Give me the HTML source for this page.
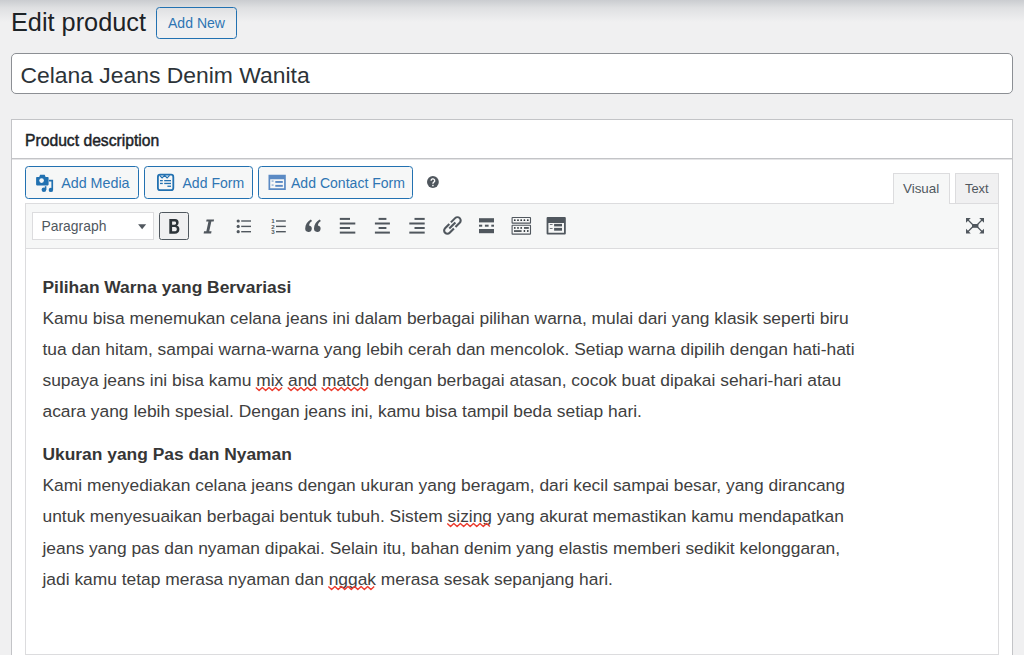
<!DOCTYPE html>
<html><head><meta charset="utf-8">
<style>
*{box-sizing:border-box;margin:0;padding:0}
html,body{width:1024px;height:655px;overflow:hidden}
body{position:relative;background:#f0f0f1 linear-gradient(to bottom,#caccd0 0px,#dfe0e2 8px,#f0f0f1 22px) no-repeat;background-size:100% 24px;font-family:"Liberation Sans",sans-serif;color:#1d2327}
.a{position:absolute;white-space:nowrap;line-height:1}
.bx{position:absolute}
.btn{position:absolute;border:1.2px solid #2271b1;border-radius:3.5px;background:#f6f7f7}
.bt{color:#2f75b3;font-size:14.05px}
.c{position:absolute;left:42.5px;font-size:17.4px;line-height:31.1px;color:#404040;white-space:nowrap}
.c b{color:#363636}
.sp{}
</style></head><body>
<div class="a" style="left:11px;top:10.2px;font-size:25.3px;color:#1d2327">Edit product</div>
<div class="btn" style="left:156px;top:6.5px;width:81px;height:32px;background:transparent"></div>
<div class="a bt" style="left:168px;top:16.2px">Add New</div>

<div class="bx" style="left:11px;top:53px;width:1002px;height:41px;border:1px solid #8c8f94;border-radius:5px;background:#fff"></div>
<div class="a" style="left:20.4px;top:64px;font-size:22.9px;color:#2c3338">Celana Jeans Denim Wanita</div>

<!-- postbox -->
<div class="bx" style="left:11px;top:119px;width:1002px;height:600px;border:1px solid #c3c4c7;background:#fff"></div>
<div class="bx" style="left:12px;top:158px;width:1000px;height:1px;background:#c3c4c7"></div><div class="bx" style="left:12px;top:159px;width:1000px;height:1px;background:#e4e4e6"></div>
<div class="a" style="left:25px;top:133px;font-size:15.7px;-webkit-text-stroke:0.45px #1d2327;color:#1d2327">Product description</div>

<!-- media buttons -->
<div class="btn" style="left:25px;top:166px;width:114px;height:33px"></div>
<div class="a bt" style="left:61.2px;top:176.1px;font-size:14.3px">Add Media</div>
<div class="btn" style="left:144px;top:166px;width:109px;height:33px"></div>
<div class="a bt" style="left:182.5px;top:176.3px">Add Form</div>
<div class="btn" style="left:258px;top:166px;width:155px;height:33px"></div>
<div class="a bt" style="left:291px;top:176.3px">Add Contact Form</div>

<!-- tabs -->
<div class="bx" style="left:893px;top:173px;width:57px;height:31px;border:1px solid #dcdcde;border-bottom:0;background:#f6f7f7"></div>
<div class="bx" style="left:955px;top:173px;width:44px;height:31px;border:1px solid #dcdcde;background:#f0f0f1"></div>
<div class="a" style="left:903px;top:181.5px;font-size:13.4px;color:#50575e">Visual</div>
<div class="a" style="left:965px;top:182.5px;font-size:12.9px;color:#50575e">Text</div>

<!-- toolbar -->
<div class="bx" style="left:25px;top:203px;width:974px;height:452px;border:1px solid #dcdcde;background:#fff"></div>
<div class="bx" style="left:26px;top:204px;width:972px;height:45px;background:#f6f7f7;border-bottom:1px solid #dcdcde"></div>
<div class="bx" style="left:893px;top:203px;width:57px;height:1px;background:#f6f7f7;border-left:1px solid #dcdcde;border-right:1px solid #dcdcde"></div>
<div class="bx" style="left:32px;top:212px;width:122px;height:28px;border:1px solid #dcdcde;background:#fff"></div>
<div class="a" style="left:41.5px;top:220px;font-size:13.9px;color:#50575e">Paragraph</div>
<div class="bx" style="left:159px;top:212px;width:30px;height:28px;border:1.4px solid #50575e;border-radius:2.5px;background:#f0f0f1"></div>

<svg width="1024" height="655" style="position:absolute;left:0;top:0">
<!-- add media icon -->
<g fill="#2271b1">
<path d="M36.8 177h2.4l.9-2.2h4.6l.9 2.2h2.2a.8.8 0 0 1 .8.8v6.8a.8.8 0 0 1-.8.8h-10.9a.8.8 0 0 1-.8-.8v-6.8a.8.8 0 0 1 .8-.8z"/>
<circle cx="41.6" cy="180.6" r="2.3" fill="#f6f7f7"/>
<path d="M48.9 179.8h4.2v10h-1.7v-8.3h-2.5z"/>
<circle cx="50.9" cy="189.9" r="2.2"/>
<circle cx="43.9" cy="189.7" r="2.3"/>
<path d="M44.8 186.2h1.6v3.6h-1.6z"/>
</g>
<!-- add form icon -->
<g fill="none" stroke="#2271b1">
<rect x="157.9" y="174.7" width="15.4" height="15.4" rx="2.2" stroke-width="1.8"/>
<path d="M159.6 175.3l2.5 2.6 2.5-2.6 2.5 2.6 2.5-2.6" stroke-width="1.2"/>
</g>
<g fill="#2271b1">
<rect x="160" y="180" width="2.8" height="1.3"/><rect x="164.2" y="180" width="6.8" height="1.3"/>
<rect x="160" y="182.8" width="2.8" height="1.3"/><rect x="164.2" y="182.8" width="6.8" height="1.3"/>
<rect x="167.4" y="185.6" width="3.6" height="1.3"/>
</g>
<!-- add contact form icon -->
<g fill="#5b8ac4">
<path d="M268.5 174.8h17.3v15.2h-17.3z M270.2 179.2v9h13.9v-9z" fill-rule="evenodd"/>
<rect x="275.3" y="181" width="7.5" height="1.9"/><rect x="275.3" y="184.9" width="7.5" height="1.9"/>
<rect x="271.6" y="180.6" width="2" height="0.9"/><rect x="271.6" y="184.6" width="2" height="0.9"/>
</g>
<!-- help -->
<circle cx="432.9" cy="182" r="5.9" fill="#50575e"/>
<path d="M431.1 180.7a1.8 1.8 0 1 1 2.7 1.5c-.7.4-.9.8-.9 1.5" fill="none" stroke="#fff" stroke-width="1.35"/>
<rect x="432.2" y="184.8" width="1.45" height="1.45" fill="#fff"/>
<!-- select arrow -->
<path d="M138.1 224.2h8.1l-4.05 5.1z" fill="#50575e"/>
<!-- toolbar icons -->
<g fill="#50575e">
<!-- B -->
<path fill="#2c3338" fill-rule="evenodd" d="M169.3 219.1H175C177.6 219.1 178.6 220.6 178.6 222.5C178.6 224 177.9 225 176.9 225.6C178.4 226.1 179.4 227.3 179.4 229.2C179.4 232 177.6 233.7 174.8 233.7H169.3Z M172.1 221.5V224.8H174.5C175.6 224.8 176.1 224.1 176.1 223.1C176.1 222.2 175.6 221.5 174.5 221.5Z M172.1 227.1V231.3H174.7C176 231.3 176.8 230.5 176.8 229.2C176.8 227.9 176 227.1 174.7 227.1Z"/>
<!-- I -->
<path d="M206.6 219.4h7.5l-.45 2.1h-2.3l-2.1 9.8h2.3l-.45 2.1h-7.5l.45-2.1h2.3l2.1-9.8h-2.3z"/>
<!-- ul -->
<circle cx="238.2" cy="221" r="1.6"/><circle cx="238.2" cy="226.4" r="1.6"/><circle cx="238.2" cy="231.7" r="1.6"/>
<rect x="241.2" y="220.3" width="9.8" height="1.4"/><rect x="241.2" y="225.7" width="9.8" height="1.4"/><rect x="241.2" y="231" width="9.8" height="1.4"/>
<!-- ol -->
<rect x="276" y="220.3" width="9.8" height="1.4"/><rect x="276" y="225.7" width="9.8" height="1.4"/><rect x="276" y="231" width="9.8" height="1.4"/>
<g font-family="Liberation Sans" font-size="6.2" font-weight="bold" fill="#50575e">
<text x="271.2" y="223.2">1</text><text x="271.2" y="228.6">2</text><text x="271.2" y="233.9">3</text>
</g>
<!-- quote -->
<path d="M310.8 219.6l1.3 1.5c-2 1.4-2.8 2.8-3 4.3a3.3 3.3 0 1 1-3.9 3.2c0-3.8 2.2-7 5.6-9z"/>
<path d="M319.6 219.6l1.3 1.5c-2 1.4-2.8 2.8-3 4.3a3.3 3.3 0 1 1-3.9 3.2c0-3.8 2.2-7 5.6-9z"/>
<!-- align left -->
<rect x="339.8" y="217.9" width="10.2" height="2"/><rect x="339.8" y="222.5" width="15.5" height="2"/><rect x="339.8" y="227" width="10.2" height="2"/><rect x="339.8" y="231.6" width="15.5" height="2"/>
<!-- align center -->
<rect x="378.6" y="217.9" width="7.8" height="2"/><rect x="374.9" y="222.5" width="15" height="2"/><rect x="378.6" y="227" width="7.8" height="2"/><rect x="374.9" y="231.6" width="15" height="2"/>
<!-- align right -->
<rect x="414.5" y="217.9" width="10.2" height="2"/><rect x="409.3" y="222.5" width="15.4" height="2"/><rect x="414.5" y="227" width="10.2" height="2"/><rect x="409.3" y="231.6" width="15.4" height="2"/>
<!-- more -->
<rect x="479" y="218.2" width="15" height="4.2"/><rect x="479" y="229" width="15" height="4.2"/>
<rect x="479" y="224.7" width="3.2" height="2"/><rect x="484.9" y="224.7" width="3.7" height="2"/><rect x="491.3" y="224.7" width="2.7" height="2"/>
</g>
<!-- link -->
<g transform="translate(452.4 225.45) rotate(-45)" fill="none" stroke="#50575e" stroke-width="2.1">
<path d="M1.1 -3.25H7.1a3.25 3.25 0 0 1 0 6.5H1.1"/>
<path d="M-1.1 3.25H-7.1a3.25 3.25 0 0 1 0-6.5H-1.1"/>
<path d="M-4.4 0H4.2"/>
</g>
<!-- kitchen sink -->
<g fill="none" stroke="#50575e" stroke-width="1.1">
<rect x="512.1" y="217.5" width="18.4" height="5.6" rx="0.4"/>
<rect x="512.1" y="225.3" width="18.4" height="8.8" rx="0.4"/>
</g>
<g fill="#2c3338">
<circle cx="514.8" cy="220.2" r="0.9"/><circle cx="518" cy="220.2" r="0.9"/><circle cx="521.2" cy="220.2" r="0.9"/><circle cx="524.4" cy="220.2" r="0.9"/><circle cx="527.8" cy="220.2" r="0.9"/>
<circle cx="514.8" cy="227.9" r="0.9"/><circle cx="518" cy="227.9" r="0.9"/><circle cx="521.2" cy="227.9" r="0.9"/><rect x="524" y="227.2" width="4.8" height="1.5"/>
<rect x="514" y="230.3" width="7.6" height="1.5"/><circle cx="524.4" cy="231" r="0.9"/><circle cx="527.8" cy="231" r="0.9"/>
</g>
<!-- form icon -->
<g fill="#50575e">
<path fill-rule="evenodd" d="M547.6 217h17.2a1 1 0 0 1 1 1v15.5a1 1 0 0 1-1 1h-17.2a1 1 0 0 1-1-1v-15.5a1 1 0 0 1 1-1z M548.4 222.9v9.8h15.6v-9.8z"/>
<rect x="554.1" y="223.9" width="7.9" height="2.5"/><rect x="554.1" y="227.9" width="7.9" height="2.8"/>
<rect x="549.8" y="224" width="2.8" height="0.8"/><rect x="549.8" y="228" width="2.8" height="0.8"/>
</g>
<!-- fullscreen -->
<g fill="#50575e">
<rect x="972" y="224" width="6.4" height="3.8"/>
<path d="M966 218h4.8l-4.8 4.8z M984 218h-4.8l4.8 4.8z M966 233.6h4.8l-4.8-4.8z M984 233.6h-4.8l4.8-4.8z"/>
</g>
<g stroke="#50575e" stroke-width="1.25">
<path d="M967.8 219.8l5 5 M982.2 219.8l-5 5 M967.8 231.8l5-5 M982.2 231.8l-5-5"/>
</g>
</svg>

<!-- content -->
<div class="c" style="top:271.9px"><b>Pilihan Warna yang Bervariasi</b></div>
<div class="c" style="top:302.9px">Kamu bisa menemukan celana jeans ini dalam berbagai pilihan warna, mulai dari yang klasik seperti biru</div>
<div class="c" style="top:333.9px">tua dan hitam, sampai warna-warna yang lebih cerah dan mencolok. Setiap warna dipilih dengan hati-hati</div>
<div class="c" style="top:364.9px">supaya jeans ini bisa kamu <span class="sp">mix</span> <span class="sp">and</span> <span class="sp">match</span> dengan berbagai atasan, cocok buat dipakai sehari-hari atau</div>
<div class="c" style="top:395.9px">acara yang lebih spesial. Dengan jeans ini, kamu bisa tampil beda setiap hari.</div>
<div class="c" style="top:438.9px"><b>Ukuran yang Pas dan Nyaman</b></div>
<div class="c" style="top:469.9px">Kami menyediakan celana jeans dengan ukuran yang beragam, dari kecil sampai besar, yang dirancang</div>
<div class="c" style="top:500.9px">untuk menyesuaikan berbagai bentuk tubuh. Sistem <span class="sp">sizing</span> yang akurat memastikan kamu mendapatkan</div>
<div class="c" style="top:532.5px">jeans yang pas dan nyaman dipakai. Selain itu, bahan denim yang elastis memberi sedikit kelonggaran,</div>
<div class="c" style="top:563.9px">jadi kamu tetap merasa nyaman dan <span class="sp">nggak</span> merasa sesak sepanjang hari.</div>
<svg width="1024" height="655" style="position:absolute;left:0;top:0">
<!-- squiggles -->
<path d="M255.84 387.40 L259.12 390.50 L262.39 387.40 L265.67 390.50 L268.94 387.40 L272.22 390.50 L275.49 387.40 L278.77 390.50 L282.04 387.40 M287.73 387.40 L291.01 390.50 L294.28 387.40 L297.56 390.50 L300.83 387.40 L304.11 390.50 L307.38 387.40 L310.66 390.50 L313.93 387.40 L317.21 390.50 M321.59 387.40 L324.87 390.50 L328.14 387.40 L331.42 390.50 L334.69 387.40 L337.97 390.50 L341.24 387.40 L344.52 390.50 L347.79 387.40 L351.07 390.50 L354.34 387.40 L357.62 390.50 L360.89 387.40 L364.17 390.50 L367.44 387.40 M447.28 523.40 L450.55 526.50 L453.83 523.40 L457.10 526.50 L460.38 523.40 L463.65 526.50 L466.93 523.40 L470.20 526.50 L473.48 523.40 L476.75 526.50 L480.03 523.40 L483.30 526.50 L486.58 523.40 L489.85 526.50 M328.34 586.40 L331.62 589.50 L334.89 586.40 L338.17 589.50 L341.44 586.40 L344.72 589.50 L347.99 586.40 L351.27 589.50 L354.54 586.40 L357.82 589.50 L361.09 586.40 L364.37 589.50 L367.64 586.40 L370.92 589.50 L374.19 586.40" fill="none" stroke="#ec3a2c" stroke-width="1.4" stroke-linejoin="round"/>
</svg>
</body></html>
